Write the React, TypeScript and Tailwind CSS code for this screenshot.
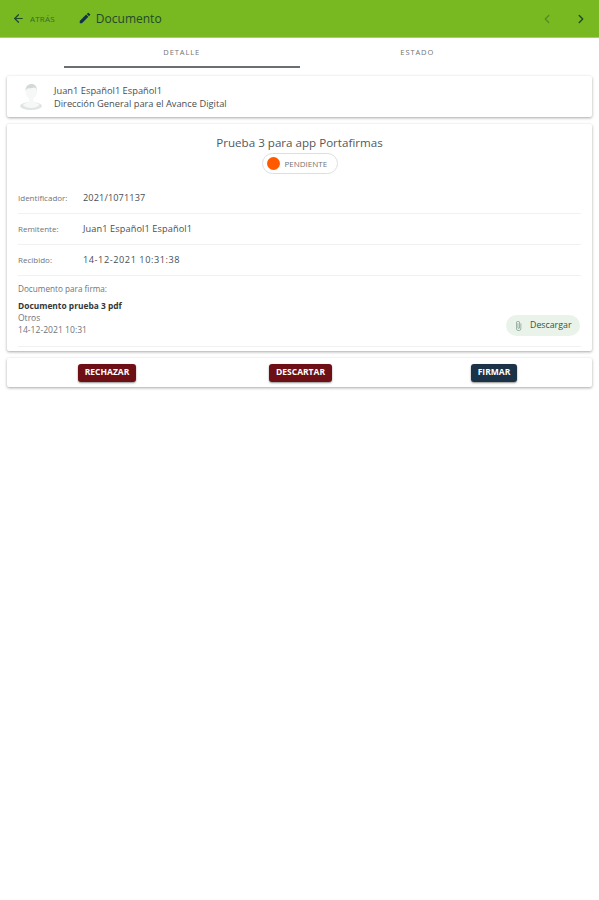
import { ArrowLeft, ChevronLeft, ChevronRight } from "lucide-react";

const rows = [
  { label: "Identificador:", value: "2021/1071137", track: "tracking-[0.1px]" },
  { label: "Remitente:", value: "Juan1 Español1 Español1", track: "tracking-[0.1px]" },
  { label: "Recibido:", value: "14-12-2021 10:31:38", track: "tracking-[0.55px]" },
];

function Avatar() {
  return (
    <svg width="28" height="28" viewBox="0 0 28 28" className="shrink-0">
      <ellipse cx="14" cy="23" rx="11" ry="4" fill="#dfe5e2" />
      <path d="M6 22c1-2 5-2 6-4v-2.500c-2-1.500-3.500-4-3.500-7.500C8.500 3.500 11 1 14.500 1S20 3.500 20 8c0 3.500-1.500 6-3.500 7.500V18c1 2 5 2 6 4-2 2-5 3-8.500 3s-6-1-8-3z" fill="#f6f8f7" />
      <path d="M8.500 8C8.500 3.500 11 1 14.500 1S20 3.500 20 8c-.5-2.500-1.500-3.500-3-3.500-2.500 1-5 .5-6.500 1C9.500 6 9 7 8.500 8z" fill="#d3d9d6" />
    </svg>
  );
}

function ActionButton({ label, className }: { label: string; className: string }) {
  return (
    <button
      className={`h-[18px] rounded-[3px] text-[8.500px] font-bold text-white shadow-[0_1px_2px_rgba(0,0,0,0.45)] uppercase flex items-center justify-center ${className}`}
    >
      {label}
    </button>
  );
}

export default function App() {
  return (
    <div className="min-h-[900px] bg-white font-['Open_Sans',sans-serif] text-[#3c4043]">
      <header className="h-[38px] bg-[#78b821] border-b border-[#a5cf6d] flex items-center pl-[12px] pr-[11px] text-[#1f4a2c]">
        <ArrowLeft size={13} strokeWidth={2.2} />
        <span className="ml-[5px] text-[8px] tracking-[0.2px] opacity-70">ATRÁS</span>
        <svg width="14" height="14" viewBox="0 0 24 24" fill="#12324a" className="ml-[23px] mb-[2px]">
          <path d="M3 17.250V21h3.750L17.810 9.940l-3.750-3.750L3 17.250zM20.710 7.040a1 1 0 000-1.410l-2.340-2.340a1 1 0 00-1.410 0l-1.830 1.830 3.750 3.750 1.830-1.830z" />
        </svg>
        <span className="ml-[4px] text-[12px] leading-none">Documento</span>
        <div className="ml-auto flex items-center gap-[20px]">
          <ChevronLeft size={14} strokeWidth={2.2} className="opacity-40" />
          <ChevronRight size={14} strokeWidth={2.4} />
        </div>
      </header>

      <nav className="h-[30px] px-[64px] flex">
        <div className="w-[236px] pt-[1px] flex items-center justify-center border-b-2 border-[#6b6f72] text-[7.500px] tracking-[0.9px] text-[#707478]">
          DETALLE
        </div>
        <div className="w-[236px] pt-[1px] pb-[2px] flex items-center justify-center text-[7.500px] tracking-[0.9px] text-[#707478]">
          ESTADO
        </div>
      </nav>

      <main className="px-[7px] pt-[8px] flex flex-col gap-[7px]">
        <section className="h-[41px] bg-white rounded-[2px] shadow-[0_1px_3px_rgba(0,0,0,0.35)] flex items-center pl-[10px] gap-[9px]">
          <Avatar />
          <div className="text-[9.300px] leading-[13px] text-[#4a4e51]">
            <p>Juan1 Español1 Español1</p>
            <p>Dirección General para el Avance Digital</p>
          </div>
        </section>

        <section className="h-[227px] bg-white rounded-[2px] shadow-[0_1px_3px_rgba(0,0,0,0.35)] px-[11px] pt-[10px] flex flex-col">
          <h1 className="text-center text-[11.600px] leading-[17px] text-[#54585b]">Prueba 3 para app Portafirmas</h1>
          <div className="self-center mt-[2px] h-[21px] w-[76px] rounded-full border border-[#dcdfe0] flex items-center pl-[4px] gap-[5px] text-[8px] text-[#707478]">
            <span className="w-[13px] h-[13px] rounded-full bg-[#ff5a00]" />
            PENDIENTE
          </div>
          <div className="mt-[9px]">
            {rows.map((row) => (
              <div key={row.label} className="h-[31px] flex items-center border-b border-[#f0f1f1]">
                <span className="w-[65px] text-[8px] text-[#707478]">{row.label}</span>
                <span className={`text-[9.200px] text-[#4a4e51] ${row.track}`}>{row.value}</span>
              </div>
            ))}
          </div>
          <div className="flex-1 mb-[4px] border-b border-[#f0f1f1] flex items-end justify-between pb-[10px]">
            <div>
              <p className="text-[8.200px] leading-[11px] text-[#707478]">Documento para firma:</p>
              <p className="mt-[6px] text-[8.400px] leading-[11px] font-bold text-[#33373a]">Documento prueba 3 pdf</p>
              <p className="mt-[1px] text-[8.500px] leading-[12px] text-[#707478]">Otros</p>
              <p className="text-[8.600px] leading-[12px] text-[#707478]">14-12-2021 10:31</p>
            </div>
            <div className="h-[21px] w-[74px] mr-[1px] rounded-full bg-[#eaf3ea] flex items-center pl-[7px] gap-[6px] text-[8.800px] text-[#1f5b3c]">
              <svg width="11" height="12" viewBox="0 0 24 24" fill="#7c9a86">
                <path d="M16.500 6v11.500c0 2.210-1.790 4-4 4s-4-1.790-4-4V5c0-1.380 1.120-2.500 2.500-2.500s2.500 1.120 2.500 2.500v10.500c0 .55-.45 1-1 1s-1-.45-1-1V6H10v9.500c0 1.380 1.120 2.500 2.500 2.500s2.500-1.120 2.500-2.500V5c0-2.210-1.790-4-4-4S7 2.790 7 5v12.500c0 3.040 2.460 5.500 5.500 5.500s5.500-2.460 5.500-5.500V6h-1.500z" />
              </svg>
              Descargar
            </div>
          </div>
        </section>

        <section className="h-[29px] bg-white rounded-[2px] shadow-[0_1px_3px_rgba(0,0,0,0.35)] flex items-center pl-[71px]">
          <ActionButton label="Rechazar" className="w-[58px] bg-[#6e0f16]" />
          <ActionButton label="Descartar" className="ml-[133px] w-[63px] bg-[#6e0f16]" />
          <ActionButton label="Firmar" className="ml-[139px] w-[46px] bg-[#1c3347]" />
        </section>
      </main>
    </div>
  );
}
